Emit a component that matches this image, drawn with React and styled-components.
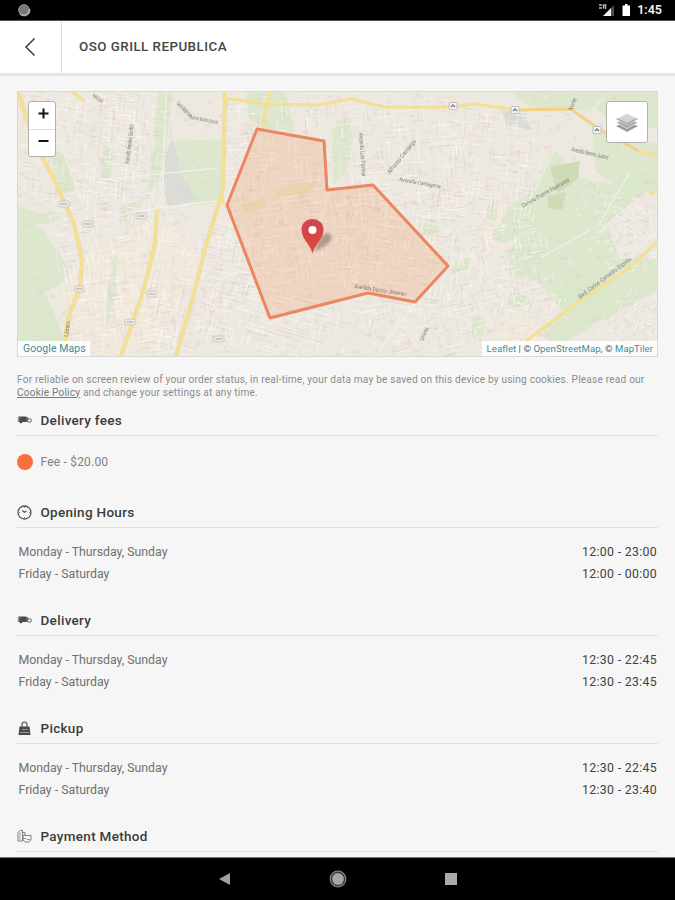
import React from "react";
import styled, { createGlobalStyle } from "styled-components";

const GlobalStyle = createGlobalStyle`
  * { box-sizing: border-box; }
  body { margin: 0; background: #f6f6f6; font-family: Roboto, "Liberation Sans", sans-serif; }
`;

const Screen = styled.div`
  width: 675px;
  height: 900px;
  display: flex;
  flex-direction: column;
  overflow: hidden;
  background: #f6f6f6;
`;

const StatusBar = styled.div`
  flex: none;
  height: 21px;
  display: flex;
  align-items: center;
  justify-content: space-between;
  padding: 0 13px 0 17px;
  background: #000;
  border-bottom: 1px solid #555;
`;

const StatusGroup = styled.div`
  display: flex;
  align-items: center;
`;

const Clock = styled.span`
  margin-left: 6px;
  color: #f2f2f2;
  font-size: 12.5px;
  font-weight: 600;
  line-height: 20px;
`;

const Header = styled.header`
  flex: none;
  height: 55px;
  display: flex;
  background: #fff;
  border-bottom: 3px solid #e4e4e4;
`;

const BackButton = styled.button`
  width: 62px;
  padding: 0 1px 0 0;
  display: flex;
  align-items: center;
  justify-content: center;
  background: #fff;
  border: 0;
  border-right: 1px solid #dedede;
`;

const Title = styled.h1`
  margin: 0 0 0 17px;
  color: #444;
  font-size: 13.4px;
  font-weight: 500;
  letter-spacing: 0.45px;
  line-height: 51px;
`;

const Content = styled.main`
  flex: 1;
  min-height: 0;
  overflow: hidden;
  padding: 15px 17px 0;
`;

const MapFrame = styled.div`
  position: relative;
  width: 641px;
  height: 266px;
  overflow: hidden;
  border: 1px solid #d6dad6;
`;

const MapCanvas = styled.svg`
  display: block;
  width: 639px;
  height: 264px;
`;

const ZoomControl = styled.div`
  position: absolute;
  top: 9px;
  left: 10px;
  width: 28px;
  height: 56px;
  display: flex;
  flex-direction: column;
  background: #fff;
  border: 1px solid #b3b1a9;
  border-radius: 3px;
`;

const ZoomButton = styled.button`
  flex: 1;
  padding: 0 0 3px 2px;
  display: flex;
  align-items: center;
  justify-content: center;
  background: none;
  border: 0;
  & + & { border-top: 1px solid #ddd; }
`;

const LayersControl = styled.button`
  position: absolute;
  top: 9px;
  right: 9px;
  width: 42px;
  height: 42px;
  padding: 0;
  display: flex;
  align-items: center;
  justify-content: center;
  background: #fff;
  border: 1px solid #b3b1a9;
  border-radius: 3px;
`;

const MapCredit = styled.div`
  position: absolute;
  bottom: 0;
  ${(p) => (p.$side === "left" ? "left: 0;" : "right: 0;")}
  height: 15px;
  padding: 0 4px 0 5px;
  background: rgba(255, 255, 255, 0.85);
  color: #555;
  font-size: ${(p) => (p.$side === "left" ? "10.4px" : "9.6px")};
  letter-spacing: ${(p) => (p.$side === "left" ? "0.13px" : "0.04px")};
  line-height: 15px;
  white-space: nowrap;
`;

const CreditLink = styled.span`
  color: #3d8c9f;
`;

const Notice = styled.p`
  margin: 17px 0 0;
  height: 33px;
  color: #8c8c8c;
  font-size: 10.1px;
  letter-spacing: 0.205px;
  line-height: 12.5px;
  white-space: nowrap;
`;

const PolicyLink = styled.a`
  text-decoration: underline;
  color: #7a7a7a;
`;

const SectionHead = styled.h2`
  margin: 0;
  height: 29px;
  padding-bottom: 2px;
  display: flex;
  align-items: center;
  border-bottom: 1px solid #e0e0e0;
  color: #3c3c3c;
  font-size: 13.5px;
  font-weight: 500;
  letter-spacing: 0.3px;
`;

const IconSlot = styled.span`
  width: 23.5px;
  display: flex;
  align-items: center;
`;

const SectionBody = styled.div`
  padding: ${(p) => (p.$fee ? "15px 0 26px" : "13px 1px 22px 1.5px")};
`;

const Row = styled.div`
  height: 22px;
  display: flex;
  align-items: center;
  justify-content: space-between;
  color: #707070;
  font-size: 12.3px;
`;

const Hours = styled.span`
  color: #424242;
  font-size: 12.3px;
  letter-spacing: 0.32px;
`;

const FeeLine = styled.div`
  height: 22px;
  display: flex;
  align-items: center;
  color: #808080;
  font-size: 12px;
  letter-spacing: 0.2px;
`;

const FeeDot = styled.span`
  width: 16px;
  height: 16px;
  margin-right: 7.5px;
  border-radius: 50%;
  background: #f9703c;
`;

const NavBar = styled.nav`
  flex: none;
  height: 43px;
  display: flex;
  justify-content: center;
  align-items: center;
  gap: 96px;
  padding: 0 0 1px 0;
  background: #000;
  border-top: 1px solid #777;
`;

function seeded(seed) {
  let s = seed;
  return () => {
    s = (s * 16807) % 2147483647;
    return s / 2147483647;
  };
}

const districts = [
  [18, 91, 120, 120, 8], [60, 200, 110, 160, -10], [100, 91, 70, 130, 5],
  [150, 215, 100, 145, 12], [220, 91, 120, 120, -4], [230, 190, 130, 100, -8],
  [200, 290, 170, 70, 16], [340, 100, 130, 120, -6], [340, 200, 120, 110, 9],
  [370, 290, 120, 70, -14], [440, 110, 100, 120, 7], [450, 220, 100, 90, -12],
  [490, 285, 70, 60, 18], [575, 190, 80, 40, 24], [600, 220, 60, 50, -25],
  [610, 290, 50, 60, 20],
];

const rand = seeded(4211);
const streets = districts.map(([x, y, w, h, turn]) => {
  const lanes = () => {
    let d = "";
    for (let i = 2; i < w; i += 3 + rand() * 3) {
      for (let k = 0; k < 2; k++) {
        const a = rand() * h * 0.85;
        d += `M${(x + i).toFixed(1)} ${(y + a).toFixed(1)}v${(h * (0.04 + rand() * 0.12)).toFixed(1)}`;
      }
    }
    for (let j = 2; j < h; j += 3 + rand() * 3) {
      for (let k = 0; k < 3; k++) {
        const a = rand() * w * 0.88;
        d += `M${(x + a).toFixed(1)} ${(y + j).toFixed(1)}h${(w * (0.03 + rand() * 0.1)).toFixed(1)}`;
      }
    }
    return d;
  };
  return { light: lanes(), dark: lanes(), turn: `rotate(${turn} ${x + w / 2} ${y + h / 2})` };
});

const blocks = Array.from({ length: 1300 }, () => ({
  x: 18 + rand() * 640,
  y: 91 + rand() * 266,
  w: 1.5 + rand() * 4,
  h: 1 + rand() * 3,
  c: ["#e8c9c4", "#dedad2", "#f6edd4", "#d8e2c8", "#e2d4dc"][Math.floor(rand() * 5)],
}));

const parks = [
  "M18 206l22 8 14-3 10 10-30 4-16 8z",
  "M18 222l24 6 20 30 8 14-12 14-14 6 10 20 12 34H18z",
  "M52 150l14 6 10 34-13 3-10-14z",
  "M158 91h14l-6 58-8 34-10 8 6-50z",
  "M104 145l10 6-4 26-10 2z",
  "M176 141l50-2-2 63-32 4-14-30-8-16z",
  "M120 206l16-4-1 14-14 2z",
  "M246 91h40l8 40-30-2-16-12z",
  "M331 135l8-14 10-4 4 24-5 25-14 20z",
  "M510 91h98l-18 20-60-4z",
  "M608 91h50v38l-42-6-20-14z",
  "M592 128l24 4 42 12v50l-40-8-22-14z",
  "M552 148l28 30 34 6 30-16 14 14-50 40-40 40 52 46-60 38-22-12 24-24-26-30-20-4-10-24 18-18-20 10-14-6 22-34 22-14z",
  "M575 250l34-22 10 30 39 2v30l-50 28-36 6-14-20z",
  "M455 261l16-4-4 14-16 3z",
  "M510 290l16 6-6 12-12-4z",
  "M472 318l14-2-4 26-10-6z",
  "M488 205l10 4-2 12-10-3z",
  "M105 305l8-40-4-8 8-2-2 44-8 26z",
  "M420 224l16-4 4 12-14 4z",
];

const labels = [
  { t: "Avenida Jacobo", x: 92, y: 96, a: 38, s: 6, w: 12 },
  { t: "Ramón Mañán Norte", x: 176, y: 104, a: 45, s: 6, w: 20 },
  { t: "Ramón Mañán Azcuet", x: 190, y: 119, a: 10, s: 5.5, w: 28 },
  { t: "Avenida Aquiles Serdán", x: 129, y: 164, a: -83, s: 6, w: 40 },
  { t: "Avenida Luis Pasteur", x: 359, y: 133, a: 86, s: 6, w: 44 },
  { t: "Alfonso Camargo", x: 390, y: 174, a: -51, s: 6, w: 42 },
  { t: "Avenida Cartagena", x: 399, y: 181, a: 10, s: 5.5, w: 42 },
  { t: "Avenida Benito Juárez", x: 571, y: 151, a: 13, s: 6, w: 38 },
  { t: "Camino Puente Esperanza", x: 523, y: 208, a: -30, s: 6, w: 54 },
  { t: "Blvd. Carlos Camacho Espíritu", x: 580, y: 299, a: -37, s: 6, w: 65 },
  { t: "Avenida Doctor Jiménez", x: 354, y: 288, a: 9, s: 6, w: 53 },
  { t: "Limones", x: 423, y: 341, a: -65, s: 6, w: 14 },
  { t: "Lázaro", x: 68, y: 337, a: -82, s: 6, w: 16 },
  { t: "Norte", x: 572, y: 111, a: -68, s: 6, w: 13 },
];

const shields = [[64, 204], [79, 289], [152, 294], [130, 322], [88, 224], [141, 216], [219, 339]];
const badges = [[453, 106], [515, 110], [597, 130]];

function StreetMap() {
  return (
    <MapCanvas viewBox="18 92 639 264" preserveAspectRatio="none">
      <defs>
        <linearGradient id="pinFill" x2="0" y2="1">
          <stop stopColor="#cf4652" />
          <stop offset="1" stopColor="#dc4937" />
        </linearGradient>
        <filter id="pinShade" x="-50%" y="-50%" width="200%" height="200%">
          <feGaussianBlur stdDeviation="1.8" />
        </filter>
        <filter id="terrain" x="0" y="0" width="100%" height="100%">
          <feGaussianBlur stdDeviation="0.65" />
        </filter>
      </defs>
      <rect x="18" y="91" width="640" height="266" fill="#ede8e0" />
      <g filter="url(#terrain)">
        <path d="M10 80h660v290H10z" fill="#ede8e0" />
        <path d="M58 290l24-30 56-34 40 4 22 34-44 80-60 16-22-34zM480 210l60-20 12 34-30 28-40-8zM506 322l20-8 14 14-14 28h-26z" fill="#f2e9dc" opacity="0.8" />
        {parks.map((d) => <path key={d} d={d} fill="#d9e6ca" opacity="0.85" />)}
        <path d="M164 155l9-16 9 35 15 26-28 8-6-18zM502 110l24 4 4 16-24-6z" fill="#dcdcd6" />
        <path d="M550 167l30-6-2 18-20 14zM548 196l18-4-4 18-14-2z" fill="#cfdab7" />
        <g opacity="0.4">
          {blocks.map((b, i) => <rect key={i} x={b.x} y={b.y} width={b.w} height={b.h} fill={b.c} />)}
        </g>
        <g fill="none" strokeWidth="0.8">
          {streets.map((s, i) => (
            <g key={i} transform={s.turn}>
              <path d={s.dark} stroke="#d8bfbb" opacity="0.32" />
              <path d={s.light} stroke="#fff" opacity="0.5" />
            </g>
          ))}
        </g>
        <path d="M61 145l31 86 12 30M100 180l58-6 60-6M166 91l-3 104-6 12M80 230l52-18 26-4 66-8M108 258l-5 96M555 148l-30 62M630 172l-32 54M540 258l50-28M380 350l54-72 14-14M330 190l-12 40" fill="none" stroke="#f5f3eb" strokeWidth="1.3" opacity="0.8" />
        <g fill="none" strokeLinejoin="round" stroke="#ecdcab" strokeWidth="4.2">
          <path d="M18 92l18 54 18 33 20 45 8 36-2 28-12 30-5 39" />
          <path d="M157 210l-2 34-12 48-22 64" />
          <path d="M225 91l-2 98-18 60-12 48-17 59" />
        </g>
        <g fill="none" strokeLinejoin="round" stroke="#f5df90" strokeWidth="3">
          <path d="M18 92l18 54 18 33 20 45 8 36-2 28-12 30-5 39" />
          <path d="M157 210l-2 34-12 48-22 64" />
          <path d="M225 91l-2 98-18 60-12 48-17 59" />
          <path d="M225 98l42 6 52 1 32-6 34 8 68 0 22-3 42 6 54-1 28 20 40 22 20 6" />
          <path d="M270 91l-8 38M72 91l12 10M224 204l-4-10M650 194l7-3" />
          <path d="M526 341l48-36 54-36 29-27" />
        </g>
        <path d="M512 110l59-1 28 20 40 22" fill="none" stroke="#f3c987" strokeWidth="3" opacity="0.65" />
        <path d="M276 191q20-10 40-8l-4 10-34 4zM244 205l20-8 2 10-20 6z" fill="#e4e0ae" opacity="0.5" />
        {shields.map(([x, y]) => (
          <g key={`${x}-${y}`}>
            <rect x={x - 5} y={y - 3} width="10" height="6" rx="1" fill="#eee9e1" stroke="#c4bdb4" strokeWidth="0.7" />
            <path d={`M${x - 3} ${y}h6`} stroke="#b4aaa4" strokeWidth="1.6" strokeDasharray="1.5 0.7" />
          </g>
        ))}
      </g>
      {badges.map(([x, y]) => (
        <g key={x}>
          <rect x={x - 4} y={y - 3.5} width="8" height="7" rx="1" fill="#f3f2f4" stroke="#b5b4be" strokeWidth="0.8" />
          <path d={`M${x - 2} ${y + 1}l2-2 2 2`} fill="none" stroke="#77788c" strokeWidth="1.3" />
        </g>
      ))}
      <path d="M257 129L324 141 327 190 373 185 448 266 415 302 368 293 270 318 227 205z" fill="#f58a4c" fillOpacity="0.2" stroke="#ec8660" strokeWidth="3" strokeLinejoin="round" />
      {labels.map((l) => (
        <text key={l.t} transform={`translate(${l.x} ${l.y}) rotate(${l.a})`} fontSize={l.s} fill="#66615d" opacity="0.8" textLength={l.w} lengthAdjust="spacingAndGlyphs">{l.t}</text>
      ))}
      <path d="M314 252l6-14q8-8 11-3t-6 11z" fill="#6f6359" opacity="0.5" filter="url(#pinShade)" />
      <path d="M312.5 253.5C309.5 243 301.5 239 301.5 229.5a11 10.5 0 0 1 22 0C323.5 239 315.5 243 312.5 253.5z" fill="url(#pinFill)" />
      <circle cx="312.5" cy="230" r="4" fill="#fff" />
    </MapCanvas>
  );
}

function TruckIcon() {
  return (
    <svg width="15" height="10" viewBox="0 0 15 10">
      <path d="M1.5 1.5H9v5.5H1.5z" fill="#4a4a4a" />
      <path d="M.5 3h3M.5 5.5h3" stroke="#888" />
      <path d="M9 2h1.5l1.5 2.5v2.5H9z" fill="#666" />
      <circle cx="4" cy="7" r="1.3" fill="#444" />
      <circle cx="12.5" cy="5.5" r="1.9" fill="#f6f6f6" stroke="#666" />
    </svg>
  );
}

function ClockIcon() {
  return (
    <svg width="15" height="15" viewBox="0 0 15 15" fill="none" stroke="#555">
      <circle cx="7.5" cy="7.5" r="6.5" strokeWidth="1.3" />
      <path d="M5.3 5.5l2.2 1.7 2-1.3" strokeWidth="1.2" />
      <path d="M7.5 2v1M7.5 12v1M2 7.5h1M12 7.5h1" strokeWidth="0.7" />
    </svg>
  );
}

function BagIcon() {
  return (
    <svg width="15" height="15" viewBox="0 0 15 15">
      <path d="M5 6V3.5Q5 1.2 7.5 1.2T10 3.5V6" fill="none" stroke="#666" strokeWidth="1.3" />
      <path d="M2.500 5.5h10l1 8.5H1.5z" fill="#4a4a4a" />
      <path d="M5 8.5h5.5M3 11.5h9" stroke="#a5a5a5" strokeWidth="0.9" />
    </svg>
  );
}

function PaymentIcon() {
  return (
    <svg width="15" height="15" viewBox="0 0 15 15" fill="none" stroke="#808080">
      <path d="M1 3.5l2-2h2.5v10.5H1zM5.5 3.5H8v3" />
      <path d="M3 3v8" strokeWidth="0.7" />
      <path d="M6 6.5h8v4.5l-2 2H8.5L6 11z" />
      <path d="M6 9.5h3l1 1h3" strokeWidth="0.8" />
    </svg>
  );
}

const sections = [
  { name: "Opening Hours", icon: <ClockIcon />, rows: ["12:00 - 23:00", "12:00 - 00:00"] },
  { name: "Delivery", icon: <TruckIcon />, rows: ["12:30 - 22:45", "12:30 - 23:45"] },
  { name: "Pickup", icon: <BagIcon />, rows: ["12:30 - 22:45", "12:30 - 23:40"] },
];
const days = ["Monday - Thursday, Sunday", "Friday - Saturday"];

export default function App() {
  return (
    <Screen>
      <GlobalStyle />
      <StatusBar>
        <svg width="14" height="14" viewBox="0 0 14 14">
          <circle cx="7" cy="7" r="5.7" fill="#777" />
          <path d="M3 11a5.7 5.7 0 0 0 9.5-5" fill="none" stroke="#c8c8c8" strokeWidth="1.5" />
          <circle cx="7" cy="7" r="5.2" fill="none" stroke="#a0a0a0" strokeWidth="0.8" />
        </svg>
        <StatusGroup>
          <svg width="32" height="16" viewBox="0 0 32 16">
            <path d="M0 3h3M0 6h3M4.5 2.5v4M4.5 3h3M6.5 4v3" stroke="#bbb" strokeWidth="1.4" />
            <path d="M4 14l8-8v8z" fill="#f5f5f5" />
            <path d="M12 6l3-3v11h-3z" fill="#4d4d4d" />
            <path d="M23.5 3.5H26V2h2.5v1.5H31V14h-7.5z" fill="#fff" />
          </svg>
          <Clock>1:45</Clock>
        </StatusGroup>
      </StatusBar>
      <Header>
        <BackButton aria-label="Back">
          <svg width="14" height="20" viewBox="0 0 14 20" fill="none" stroke="#444" strokeWidth="1.6">
            <path d="M11.5 1.5L3 10l8.5 8.5" />
          </svg>
        </BackButton>
        <Title>OSO GRILL REPUBLICA</Title>
      </Header>
      <Content>
        <MapFrame>
          <StreetMap />
          <ZoomControl>
            <ZoomButton aria-label="Zoom in">
              <svg width="11" height="11"><path d="M.5 5.5h10M5.5.5v10" stroke="#111" strokeWidth="2" /></svg>
            </ZoomButton>
            <ZoomButton aria-label="Zoom out">
              <svg width="11" height="11"><path d="M.5 5h10" stroke="#111" strokeWidth="2" /></svg>
            </ZoomButton>
          </ZoomControl>
          <LayersControl aria-label="Layers">
            <svg width="26" height="26" viewBox="0 0 26 26">
              <path d="M2 17l11 6 11-6-4-1.5-7 3.5-7-3.5z" fill="#9c9c9c" />
              <path d="M2 13.5l11 6 11-6-4-1.5-7 3.5-7-3.5z" fill="#aaa" stroke="#fff" strokeWidth="0.5" />
              <path d="M2 10l11-5.5L24 10l-11 6z" fill="#d3d3d3" stroke="#fff" strokeWidth="0.5" />
              <path d="M2 10l11 6 11-6-1.5-.8L13 14 3.5 9.2z" fill="#ababab" />
            </svg>
          </LayersControl>
          <MapCredit $side="left"><CreditLink>Google Maps</CreditLink></MapCredit>
          <MapCredit $side="right">
            <CreditLink>Leaflet</CreditLink> | © <CreditLink>OpenStreetMap</CreditLink>, © <CreditLink>MapTiler</CreditLink>
          </MapCredit>
        </MapFrame>
        <Notice>
          For reliable on screen review of your order status, in real-time, your data may be saved on this device by using cookies. Please read our
          <br />
          <PolicyLink>Cookie Policy</PolicyLink> and change your settings at any time.
        </Notice>
        <SectionHead><IconSlot><TruckIcon /></IconSlot>Delivery fees</SectionHead>
        <SectionBody $fee>
          <FeeLine><FeeDot />Fee - $20.00</FeeLine>
        </SectionBody>
        {sections.map((s) => (
          <section key={s.name}>
            <SectionHead><IconSlot>{s.icon}</IconSlot>{s.name}</SectionHead>
            <SectionBody>
              {s.rows.map((h, i) => (
                <Row key={days[i]}><span>{days[i]}</span><Hours>{h}</Hours></Row>
              ))}
            </SectionBody>
          </section>
        ))}
        <SectionHead><IconSlot><PaymentIcon /></IconSlot>Payment Method</SectionHead>
      </Content>
      <NavBar>
        <svg width="16" height="16" viewBox="0 0 16 16"><path d="M2 8l11-6v12z" fill="#a0a0a0" /></svg>
        <svg width="18" height="18" viewBox="0 0 18 18">
          <circle cx="9" cy="9" r="7.8" fill="#333" stroke="#858585" strokeWidth="1.2" />
          <circle cx="9" cy="9" r="5.9" fill="#a6a6a6" />
        </svg>
        <svg width="16" height="16" viewBox="0 0 16 16"><path d="M2 2h12v12H2z" fill="#aaa" /></svg>
      </NavBar>
    </Screen>
  );
}
